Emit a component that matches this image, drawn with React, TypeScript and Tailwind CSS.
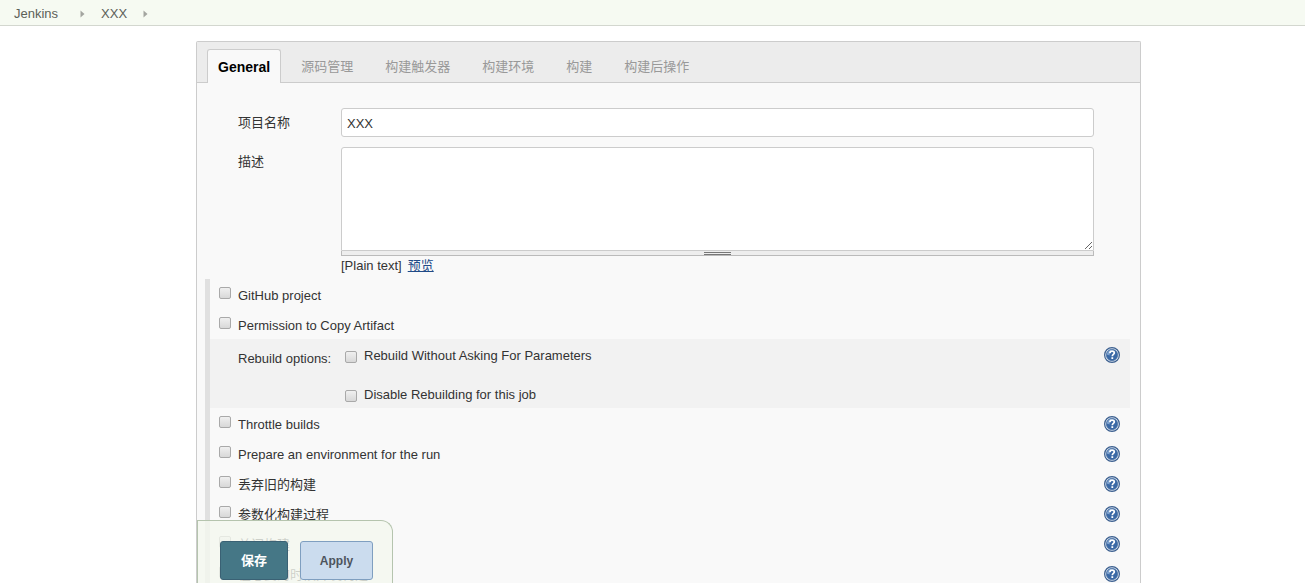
import { useState } from 'react';

const TABS = ['General', '源码管理', '构建触发器', '构建环境', '构建', '构建后操作'];

const OPTIONS_TOP = [
  { id: 'github', label: 'GitHub project', help: false },
  { id: 'copy-artifact', label: 'Permission to Copy Artifact', help: false },
];

const OPTIONS_BOTTOM = [
  { id: 'throttle', label: 'Throttle builds', help: true },
  { id: 'prepare-env', label: 'Prepare an environment for the run', help: true },
  { id: 'discard', label: '丢弃旧的构建', help: true },
  { id: 'params', label: '参数化构建过程', help: true },
  { id: 'disable', label: '关闭构建', help: true },
  { id: 'concurrent', label: '在必要的时候并发构建', help: true },
];

function Crumb() {
  return (
    <svg width="5" height="8" viewBox="0 0 5 8" aria-hidden="true">
      <path d="M0.5 0.5L4.5 4L0.5 7.5Z" fill="#a3a5a0" />
    </svg>
  );
}

function HelpButton() {
  return (
    <button type="button" aria-label="Help" className="block size-4 shrink-0">
      <svg width="16" height="16" viewBox="0 0 16 16">
        <circle cx="8" cy="8" r="7.4" fill="#dfe9f4" stroke="#3d608f" strokeWidth="1.2" />
        <circle cx="8" cy="8" r="5.7" fill="#3a69a6" stroke="#42689a" strokeWidth="0.6" />
        <path d="M2.8 7.6A5.2 5.2 0 0 1 8 2.8C6.2 4.4 5.4 6 5.6 8.4Z" fill="#7fa3cf" />
        <path
          d="M5.9 6.2C6 4.8 6.9 4.2 8.1 4.2C9.4 4.2 10.3 4.9 10.3 6C10.3 7.4 8.3 7.5 8.3 9.2"
          fill="none"
          stroke="#fff"
          strokeWidth="1.7"
        />
        <rect x="7.4" y="10.2" width="1.8" height="1.8" fill="#fff" />
      </svg>
    </button>
  );
}

function Checkbox({ id }: { id: string }) {
  return (
    <input
      id={id}
      type="checkbox"
      className="size-3 shrink-0 appearance-none rounded-xs border border-[#a9a9a9] bg-linear-to-b from-[#f0f0f0] to-[#d8d8d8] checked:bg-[#4b758b]"
    />
  );
}

function OptionRow({ id, label, help }: { id: string; label: string; help: boolean }) {
  return (
    <div className="flex h-[30px] items-center pr-[10px] pl-[9px]">
      <div className="flex pb-[2px]">
        <Checkbox id={id} />
      </div>
      <label htmlFor={id} className="flex-1 pt-1 pl-[7px]">
        {label}
      </label>
      {help && (
        <div className="pt-[2px]">
          <HelpButton />
        </div>
      )}
    </div>
  );
}

export default function App() {
  const [activeTab, setActiveTab] = useState('General');
  const [name, setName] = useState('XXX');

  return (
    <div className="h-screen overflow-y-auto bg-white font-['Liberation_Sans','Noto_Sans_CJK_SC',sans-serif] text-[13px] leading-4 text-[#333] [scrollbar-width:none]">
      <nav className="flex h-[26px] items-center border-b border-[#d3d7cf] bg-[#f6faf2] pt-[2px] pl-[14px] text-[#5c6058]">
        <a href="#jenkins">Jenkins</a>
        <span className="pr-4 pl-[22px]">
          <Crumb />
        </span>
        <a href="#xxx">XXX</a>
        <span className="pl-4">
          <Crumb />
        </span>
      </nav>

      <main className="pt-[15px] pr-[164px] pl-[196px]">
        <form
          onSubmit={(e) => e.preventDefault()}
          className="rounded-t-xs border border-b-0 border-[#ccc] bg-[#f9f9f9]"
        >
          <div className="flex h-[41px] items-end border-b border-[#ccc] bg-[#ececec] pl-[10px]">
            {TABS.map((tab) => (
              <button
                key={tab}
                type="button"
                onClick={() => setActiveTab(tab)}
                className={
                  tab === activeTab
                    ? '-mb-px mr-1 h-[34px] rounded-t-[3px] border border-b-0 border-[#ccc] bg-[#f9f9f9] px-[10px] text-sm font-bold text-black'
                    : 'h-8 px-4 pt-[2px] text-[#999]'
                }
              >
                {tab}
              </button>
            ))}
          </div>

          <div className="pt-[25px] pr-[46px] pl-[41px]">
            <div className="flex">
              <label htmlFor="name" className="w-[103px] shrink-0 pt-[7px]">
                项目名称
              </label>
              <input
                id="name"
                type="text"
                value={name}
                onChange={(e) => setName(e.target.value)}
                className="h-[29px] min-w-0 flex-1 rounded-[3px] border border-[#ccc] bg-white px-[5px] pt-[2px]"
              />
            </div>
            <div className="mt-[10px] flex">
              <label htmlFor="description" className="w-[103px] shrink-0 pt-[7px]">
                描述
              </label>
              <div className="min-w-0 flex-1">
                <textarea
                  id="description"
                  className="block h-[104px] w-full rounded-t-[3px] border border-[#ccc] bg-white p-[5px]"
                />
                <div className="flex h-[5px] items-center justify-center border border-t-0 border-[#bbb] bg-[#eee]">
                  <span className="h-[3px] w-[27px] border-y border-[#777]" />
                </div>
                <div className="flex gap-1.5 pt-[2px]">
                  <span>[Plain text]</span>
                  <a href="#preview" className="text-[#204a87] underline">
                    预览
                  </a>
                </div>
              </div>
            </div>
          </div>

          <div className="mt-[5px] mr-[10px] ml-2 border-l-[5px] border-[#e0e0e0]">
            {OPTIONS_TOP.map((option) => (
              <OptionRow key={option.id} {...option} />
            ))}
            <div className="flex h-[69px] items-start bg-[#f2f2f2] pt-2 pr-[10px] pl-7">
              <span className="w-[107px] pt-1">Rebuild options:</span>
              <div className="flex flex-1 flex-col gap-[22px]">
                <div className="flex">
                  <div className="flex pt-1">
                    <Checkbox id="rebuild" />
                  </div>
                  <label htmlFor="rebuild" className="pt-px pl-[7px]">
                    Rebuild Without Asking For Parameters
                  </label>
                </div>
                <div className="flex">
                  <div className="flex pt-1">
                    <Checkbox id="no-rebuild" />
                  </div>
                  <label htmlFor="no-rebuild" className="pt-px pl-[7px]">
                    Disable Rebuilding for this job
                  </label>
                </div>
              </div>
              <HelpButton />
            </div>
            {OPTIONS_BOTTOM.map((option) => (
              <OptionRow key={option.id} {...option} />
            ))}
          </div>

          <div className="sticky bottom-0 flex h-[63px] w-fit gap-3 rounded-tr-xl border border-b-0 border-[#b5c4ae] bg-[#f4f8ef]/80 pt-5 pr-[19px] pb-1 pl-[22px] text-xs font-bold">
            <button
              type="submit"
              className="h-[39px] w-[68px] rounded-[3px] border border-[#3a6174] bg-[#457786] text-[13px] text-white"
            >
              保存
            </button>
            <button
              type="button"
              className="h-[39px] w-[73px] rounded-[3px] border border-[#7f9fc0] bg-[#cbdcee] text-[#4d545d]"
            >
              Apply
            </button>
          </div>
        </form>
      </main>
    </div>
  );
}
